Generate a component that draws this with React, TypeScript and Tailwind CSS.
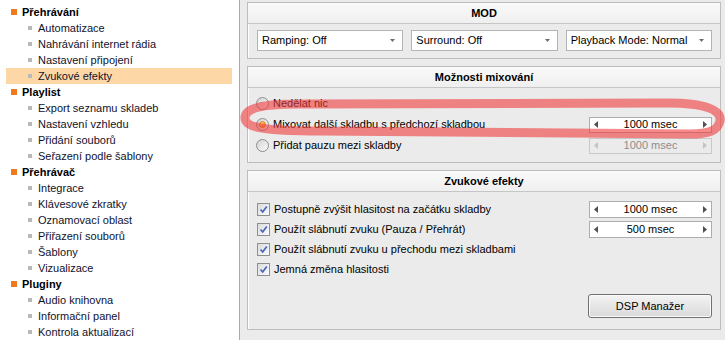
import type { ReactNode } from "react";

const tree: Array<{ title: string; items: string[] }> = [
  { title: "Přehrávání", items: ["Automatizace", "Nahrávání internet rádia", "Nastavení připojení", "Zvukové efekty"] },
  { title: "Playlist", items: ["Export seznamu skladeb", "Nastavení vzhledu", "Přidání souborů", "Seřazení podle šablony"] },
  {
    title: "Přehrávač",
    items: ["Integrace", "Klávesové zkratky", "Oznamovací oblast", "Přiřazení souborů", "Šablony", "Vizualizace"]
  },
  { title: "Pluginy", items: ["Audio knihovna", "Informační panel", "Kontrola aktualizací"] }
];

const selected = "Zvukové efekty";

export default function App() {
  return (
    <div className="relative flex h-[340px] w-[725px] overflow-hidden bg-[#ebebeb] font-['Liberation_Sans',Arial,sans-serif] text-[11px] text-black">
      <aside className="w-[240px] shrink-0 border-r border-[#a9a9a9] bg-white pt-[4px] text-[#12122c]">
        {tree.map((section) => (
          <div key={section.title}>
            <div className="flex h-[16px] items-center">
              <span className="ml-[11px] h-[6px] w-[6px] bg-[#ef7a1f]" />
              <span className="ml-[5px] font-bold text-black">{section.title}</span>
            </div>
            {section.items.map((item) => (
              <div
                key={item}
                className={`flex h-[16px] items-center ${item === selected ? "ml-[6px] w-[226px] bg-[#fdd8a6]" : ""}`}
              >
                <span className={`${item === selected ? "ml-[22px]" : "ml-[28px]"} h-[4px] w-[4px] bg-[#b9b9b9]`} />
                <span className="ml-[6px]">{item}</span>
              </div>
            ))}
          </div>
        ))}
      </aside>

      <main className="flex w-[485px] flex-col gap-[7px] pl-[7px] pt-[2px]">
        <Panel title="MOD">
          <div className="grid grid-cols-3 gap-[8px] pb-[7px] pl-[9px] pr-[8px] pt-[6px]">
            <Select label="Ramping: Off" />
            <Select label="Surround: Off" />
            <Select label="Playback Mode: Normal" />
          </div>
        </Panel>

        <Panel title="Možnosti mixování">
          <div className="pb-[6px] pl-[8px] pr-[8px] pt-[5px]">
            <div className="flex h-[21px] items-center">
              <Radio />
              <span className="ml-[4px]">Nedělat nic</span>
            </div>
            <div className="flex h-[21px] items-center">
              <Radio checked />
              <span className="ml-[4px]">Mixovat další skladbu s předchozí skladbou</span>
              <Spinner value="1000 msec" className="ml-auto h-[16px]" />
            </div>
            <div className="flex h-[21px] items-center">
              <Radio />
              <span className="ml-[4px]">Přidat pauzu mezi skladby</span>
              <Spinner value="1000 msec" disabled className="ml-auto h-[16px]" />
            </div>
          </div>
        </Panel>

        <Panel title="Zvukové efekty">
          <div className="pb-[11px] pl-[9px] pr-[8px] pt-[7px]">
            <div className="flex h-[20px] items-center">
              <Check />
              <span className="ml-[4px]">Postupně zvýšit hlasitost na začátku skladby</span>
              <Spinner value="1000 msec" className="ml-auto h-[17px]" />
            </div>
            <div className="flex h-[20px] items-center">
              <Check />
              <span className="ml-[4px]">Použít slábnutí zvuku (Pauza / Přehrát)</span>
              <Spinner value="500 msec" className="ml-auto h-[17px]" />
            </div>
            <div className="flex h-[20px] items-center">
              <Check />
              <span className="ml-[4px]">Použít slábnutí zvuku u přechodu mezi skladbami</span>
            </div>
            <div className="flex h-[20px] items-center">
              <Check />
              <span className="ml-[4px]">Jemná změna hlasitosti</span>
            </div>
            <div className="mt-[15px] flex justify-end">
              <button className="flex h-[24px] w-[124px] items-center justify-center rounded-[3px] border border-[#707070] bg-gradient-to-b from-[#f3f3f3] to-[#dadada] text-[11px] text-black shadow-[inset_0_0_0_1px_#fbfbfb]">
                DSP Manažer
              </button>
            </div>
          </div>
        </Panel>
      </main>

      {/* red marker loop drawn over the mixing option */}
      <svg className="pointer-events-none absolute left-0 top-0" width="725" height="340">
        <path
          d="M 300 104 L 668 103 C 705 103 722 110 720 121 C 718 131 708 134 690 134 L 320 131 C 262 131 245 127 245 118 C 245 108 262 104 300 104"
          fill="none"
          stroke="rgb(240,60,60)"
          strokeOpacity="0.6"
          strokeWidth="9"
          strokeLinecap="round"
        />
      </svg>
    </div>
  );
}

function Panel({ title, children }: { title: string; children: ReactNode }) {
  return (
    <section className="w-[474px] border border-[#bdbdbd] bg-[#ebebeb] shadow-[inset_1px_1px_0_#ffffff]">
      <div className="flex h-[21px] items-center justify-center border-b border-[#c6c6c6] bg-gradient-to-b from-[#fafafa] to-[#efefef] font-bold">
        {title}
      </div>
      {children}
    </section>
  );
}

function Select({ label }: { label: string }) {
  return (
    <div className="flex h-[21px] items-center border border-[#b4b4b4] bg-white pl-[4px] pr-[7px]">
      <span>{label}</span>
      <svg className="ml-auto" width="5" height="3" viewBox="0 0 5 3">
        <path d="M0 0 H5 L2.5 3 Z" fill="#7a6b5c" />
      </svg>
    </div>
  );
}

function Radio({ checked = false }: { checked?: boolean }) {
  return (
    <span className="flex h-[13px] w-[13px] items-center justify-center rounded-full border border-[#8c8e8e] bg-gradient-to-br from-[#d3d3d3] to-[#fbfbfb]">
      {checked && (
        <span className="h-[7px] w-[7px] rounded-full border border-[#d9801c] bg-gradient-to-br from-[#ffd27a] to-[#f2921f]" />
      )}
    </span>
  );
}

function Check() {
  return (
    <span className="flex h-[13px] w-[13px] items-center justify-center border border-[#8f8f8f] bg-gradient-to-br from-[#dcdcdc] to-[#fafafa]">
      <svg width="9" height="9" viewBox="0 0 9 9">
        <path d="M1.5 4.5 L3.7 7 L7.8 1.5" fill="none" stroke="#4468b8" strokeWidth="1.7" />
      </svg>
    </span>
  );
}

function Spinner({ value, disabled = false, className = "" }: { value: string; disabled?: boolean; className?: string }) {
  const arrow = disabled ? "#c4c4c4" : "#505050";
  return (
    <div
      className={`flex w-[123px] items-center border px-[4px] ${
        disabled ? "border-[#c9c9c9] bg-[#ebebeb] text-[#8d8d8d]" : "border-[#adadad] bg-white"
      } ${className}`}
    >
      <svg width="4" height="7" viewBox="0 0 4 7">
        <path d="M4 0 V7 L0 3.5 Z" fill={arrow} />
      </svg>
      <span className="flex-1 text-center">{value}</span>
      <svg width="4" height="7" viewBox="0 0 4 7">
        <path d="M0 0 V7 L4 3.5 Z" fill={arrow} />
      </svg>
    </div>
  );
}
